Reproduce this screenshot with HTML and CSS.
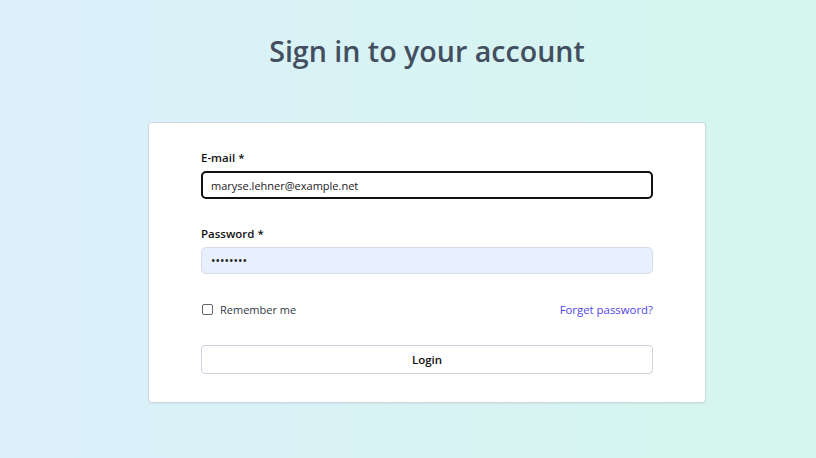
FILE: index.html
```html
<!DOCTYPE html>
<html lang="en">
<head>
<meta charset="utf-8">
<title>Sign in</title>
<link rel="stylesheet" href="styles.css">
</head>
<body>
<main class="page">
  <div class="column">
    <h1 class="title">Sign in to your account</h1>
    <form class="card">
      <div class="field">
        <label class="label" for="email">E-mail *</label>
        <input class="input input-focus" id="email" type="text" value="maryse.lehner@example.net">
      </div>
      <div class="field">
        <label class="label" for="password">Password *</label>
        <input class="input input-filled" id="password" type="password" value="password">
      </div>
      <div class="row">
        <label class="remember"><span class="check"></span><span>Remember me</span></label>
        <a class="link" href="#">Forget password?</a>
      </div>
      <button class="btn" type="button">Login</button>
    </form>
  </div>
</main>
</body>
</html>
```
FILE: styles.css
```css
* { box-sizing: border-box; }
html, body { margin: 0; height: 100%; }
body {
  font-family: "Open Sans", "Noto Sans", sans-serif;
  background: linear-gradient(to right, #dcf0fc, #d4f6ec);
  color: #111827;
}
.page { padding-top: 31px; }
.column { width: 558px; margin-left: 148px; }
.title {
  margin: 0;
  text-align: center;
  font-size: 28.6px;
  line-height: 40px;
  font-weight: 600;
  color: #434f60;
}
.card {
  margin-top: 51px;
  background: #fff;
  border: 1px solid #cfd8e0;
  border-radius: 4px;
  box-shadow: 0 1px 2px rgba(0,0,0,0.06);
  padding: 27px 52px 28px;
}
.field { margin-bottom: 27px; }
.field + .field { margin-bottom: 27px; }
.label {
  display: block;
  font-size: 11.5px;
  line-height: 16px;
  font-weight: 600;
  color: #111;
  margin-bottom: 5px;
}
.input {
  display: block;
  width: 100%;
  height: 28px;
  border-radius: 5px;
  padding: 0 8px;
  font-family: inherit;
  font-size: 11px;
  color: #222;
  outline: none;
}
.input-focus { border: 2px solid #111; }
.input-filled { border: 1px solid #d5dde6; background: #e8f0fe; height: 27px; padding: 0 9px; font-size: 12px; }
.row {
  display: flex;
  justify-content: space-between;
  align-items: center;
  height: 16px;
}
.remember {
  display: flex;
  align-items: center;
  gap: 7px;
  font-size: 11px;
  color: #333a44;
}
.check {
  width: 11px;
  height: 11px;
  border: 1px solid #666;
  border-radius: 2px;
  margin-left: 1px;
}
.link {
  font-size: 11.4px;
  color: #4f46e5;
  text-decoration: none;
}
.btn {
  display: block;
  width: 100%;
  height: 29px;
  margin-top: 28px;
  background: #fff;
  border: 1px solid #cbd3dc;
  border-radius: 4px;
  font-family: inherit;
  font-size: 11.5px;
  font-weight: 600;
  color: #111;
}
```
